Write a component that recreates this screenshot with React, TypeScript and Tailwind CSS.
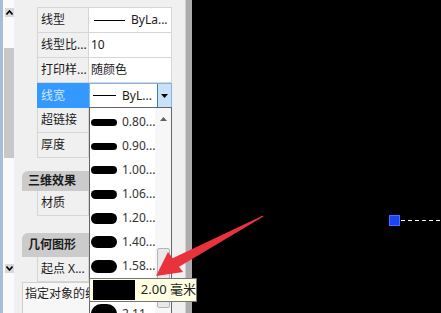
import React from "react";

const items = [
  { v: "0.80...", h: 7 },
  { v: "0.90...", h: 7 },
  { v: "1.00...", h: 8 },
  { v: "1.06...", h: 9 },
  { v: "1.20...", h: 11 },
  { v: "1.40...", h: 12 },
  { v: "1.58...", h: 13 },
  { v: "", h: 20 },
  { v: "2.11...", h: 20 },
];

function Row({ label, children }: { label: string; children?: React.ReactNode }) {
  return (
    <div className="flex h-[25px] border-b border-[#d6d6d6]">
      <div className="w-[52px] shrink-0 bg-[#f0f0f0] border-l border-r border-[#d6d6d6] pl-[3px] flex items-center">
        <span className="whitespace-nowrap">{label}</span>
      </div>
      <div className="flex-1 bg-white border-r border-[#d6d6d6] flex items-center pl-[2px]">{children}</div>
    </div>
  );
}

export default function App() {
  return (
    <div className="relative w-[441px] h-[313px] overflow-hidden flex bg-black font-['Noto_Sans','Noto_Sans_CJK_SC',sans-serif] text-[12px] text-[#1b1b1b]">
      {/* left panel */}
      <div className="flex w-[192px] h-full bg-[#f0f0f0] shrink-0">
        <div className="w-[3px] bg-[#a7bedb]" />
        <div className="w-[11px] flex flex-col bg-[#fafafa]">
          <div className="mt-[8px] ml-[2px] w-[9px] h-[9px] bg-[#d8d8d8] flex items-center justify-center">
            <svg width="7" height="5" viewBox="0 0 7 5">
              <polyline points="0.5,4.5 3.5,1 6.5,4.5" fill="none" stroke="#000" strokeWidth="1.6" />
            </svg>
          </div>
          <div className="h-[31px]" />
          <div className="ml-[1px] w-[10px] h-[110px] bg-[#c8c8c8]" />
          <div className="h-[106px]" />
          <div className="ml-[2px] w-[9px] h-[9px] bg-[#d8d8d8] flex items-center justify-center">
            <svg width="7" height="5" viewBox="0 0 7 5">
              <polyline points="0.5,0.5 3.5,4 6.5,0.5" fill="none" stroke="#000" strokeWidth="1.6" />
            </svg>
          </div>
        </div>
        <div className="w-[158px] flex flex-col pt-[7px]">
          <div className="ml-[23px] border-t border-[#d6d6d6]">
            <Row label="线型">
              <span className="inline-block w-[31px] h-px bg-black ml-[3px] mr-[6px]" />
              <span>ByLa...</span>
            </Row>
            <Row label="线型比...">
              <span>10</span>
            </Row>
            <Row label="打印样...">
              <span>随颜色</span>
            </Row>
            <div className="flex h-[25px]">
              <div className="w-[52px] shrink-0 bg-[#3399ff] text-[#cfe6ff] pl-[4px] flex items-center">
                <span>线宽</span>
              </div>
              <div className="flex-1 bg-white border border-[#7eb4ea] flex items-center pl-[3px]">
                <span className="inline-block w-[23px] h-px bg-black mr-[6px]" />
                <span>ByL...</span>
                <div className="ml-auto w-[14px] h-full bg-[#c9e2f7] border-l border-[#3c7fb1] flex items-center justify-center">
                  <svg width="7" height="4" viewBox="0 0 7 4">
                    <polygon points="0,0 7,0 3.5,4" fill="#000" />
                  </svg>
                </div>
              </div>
            </div>
            <Row label="超链接" />
            <Row label="厚度" />
          </div>
          <div className="mt-[13px] ml-[8px] h-[20px] bg-[#cbcbcb] rounded-tl-[6px] pl-[6px] flex items-center font-bold">
            三维效果
          </div>
          <div className="ml-[23px]">
            <Row label="材质" />
          </div>
          <div className="mt-[17px] ml-[8px] h-[24px] bg-[#cbcbcb] rounded-tl-[6px] pl-[6px] flex items-center font-bold">
            几何图形
          </div>
          <div className="ml-[23px]">
            <Row label="起点 X..." />
          </div>
          <div className="ml-[8px] flex-1 border-l border-t border-[#d0d0d0] bg-[#f7f7f7] pl-[2px] pt-[2px] whitespace-nowrap overflow-hidden">
            指定对象的线宽
          </div>
        </div>
        <div className="w-[13px] bg-[#f0f0f0]" />
        <div className="w-[7px] bg-[#adadad] border-l border-[#d2d2d2]" />
      </div>
      <div className="flex-1 bg-black" />

      {/* dropdown list */}
      <div className="absolute left-[89px] top-[107px] w-[83px] h-[220px] bg-white border border-[#646464] flex">
        <div className="flex-1 flex flex-col pt-[2px]">
          {items.map((it, i) => (
            <div key={i} className="h-[24px] flex items-center shrink-0 text-[#333]">
              <span className="ml-[1px] w-[26px] rounded-full bg-black shrink-0" style={{ height: it.h }} />
              {it.v && <span className="ml-[5px] whitespace-nowrap">{it.v}</span>}
            </div>
          ))}
        </div>
        <div className="w-[16px] bg-[#f7f7f7] flex flex-col items-center">
          <svg className="mt-[9px]" width="7" height="4" viewBox="0 0 7 4">
            <polygon points="0,4 7,4 3.5,0" fill="#606060" />
          </svg>
          <div className="mt-[127px] w-[13px] h-[60px] bg-[#e8e8e8] border border-[#b4b4b4] rounded-[2px]" />
        </div>
      </div>

      {/* tooltip */}
      <div className="absolute left-[89px] top-[278px] w-[108px] h-[24px] bg-[#ffffe1] border border-[#767676] flex items-center text-[13px] text-[#222]">
        <span className="ml-[3px] w-[45px] h-[20px] bg-black" />
        <span className="ml-[6px] whitespace-nowrap">2.00 毫米</span>
      </div>

      {/* CAD grip */}
      <div className="absolute left-[389px] top-[215px] w-[11px] h-[11px] bg-[#1846f5] border border-[#4a6cff]" />
      <svg className="absolute left-[400px] top-[219px]" width="41" height="3" viewBox="0 0 41 3">
        <line x1="1" y1="1.5" x2="41" y2="1.5" stroke="#fff" strokeWidth="1" strokeDasharray="4 3" />
      </svg>

      {/* red arrow */}
      <svg className="absolute left-0 top-0 pointer-events-none" width="441" height="313" viewBox="0 0 441 313">
        <polygon points="263,215.5 263.5,216.5 177,268 171,259" fill="#e8323c" />
        <polygon points="156,276 168,252 183,272" fill="#e8323c" />
      </svg>
    </div>
  );
}
